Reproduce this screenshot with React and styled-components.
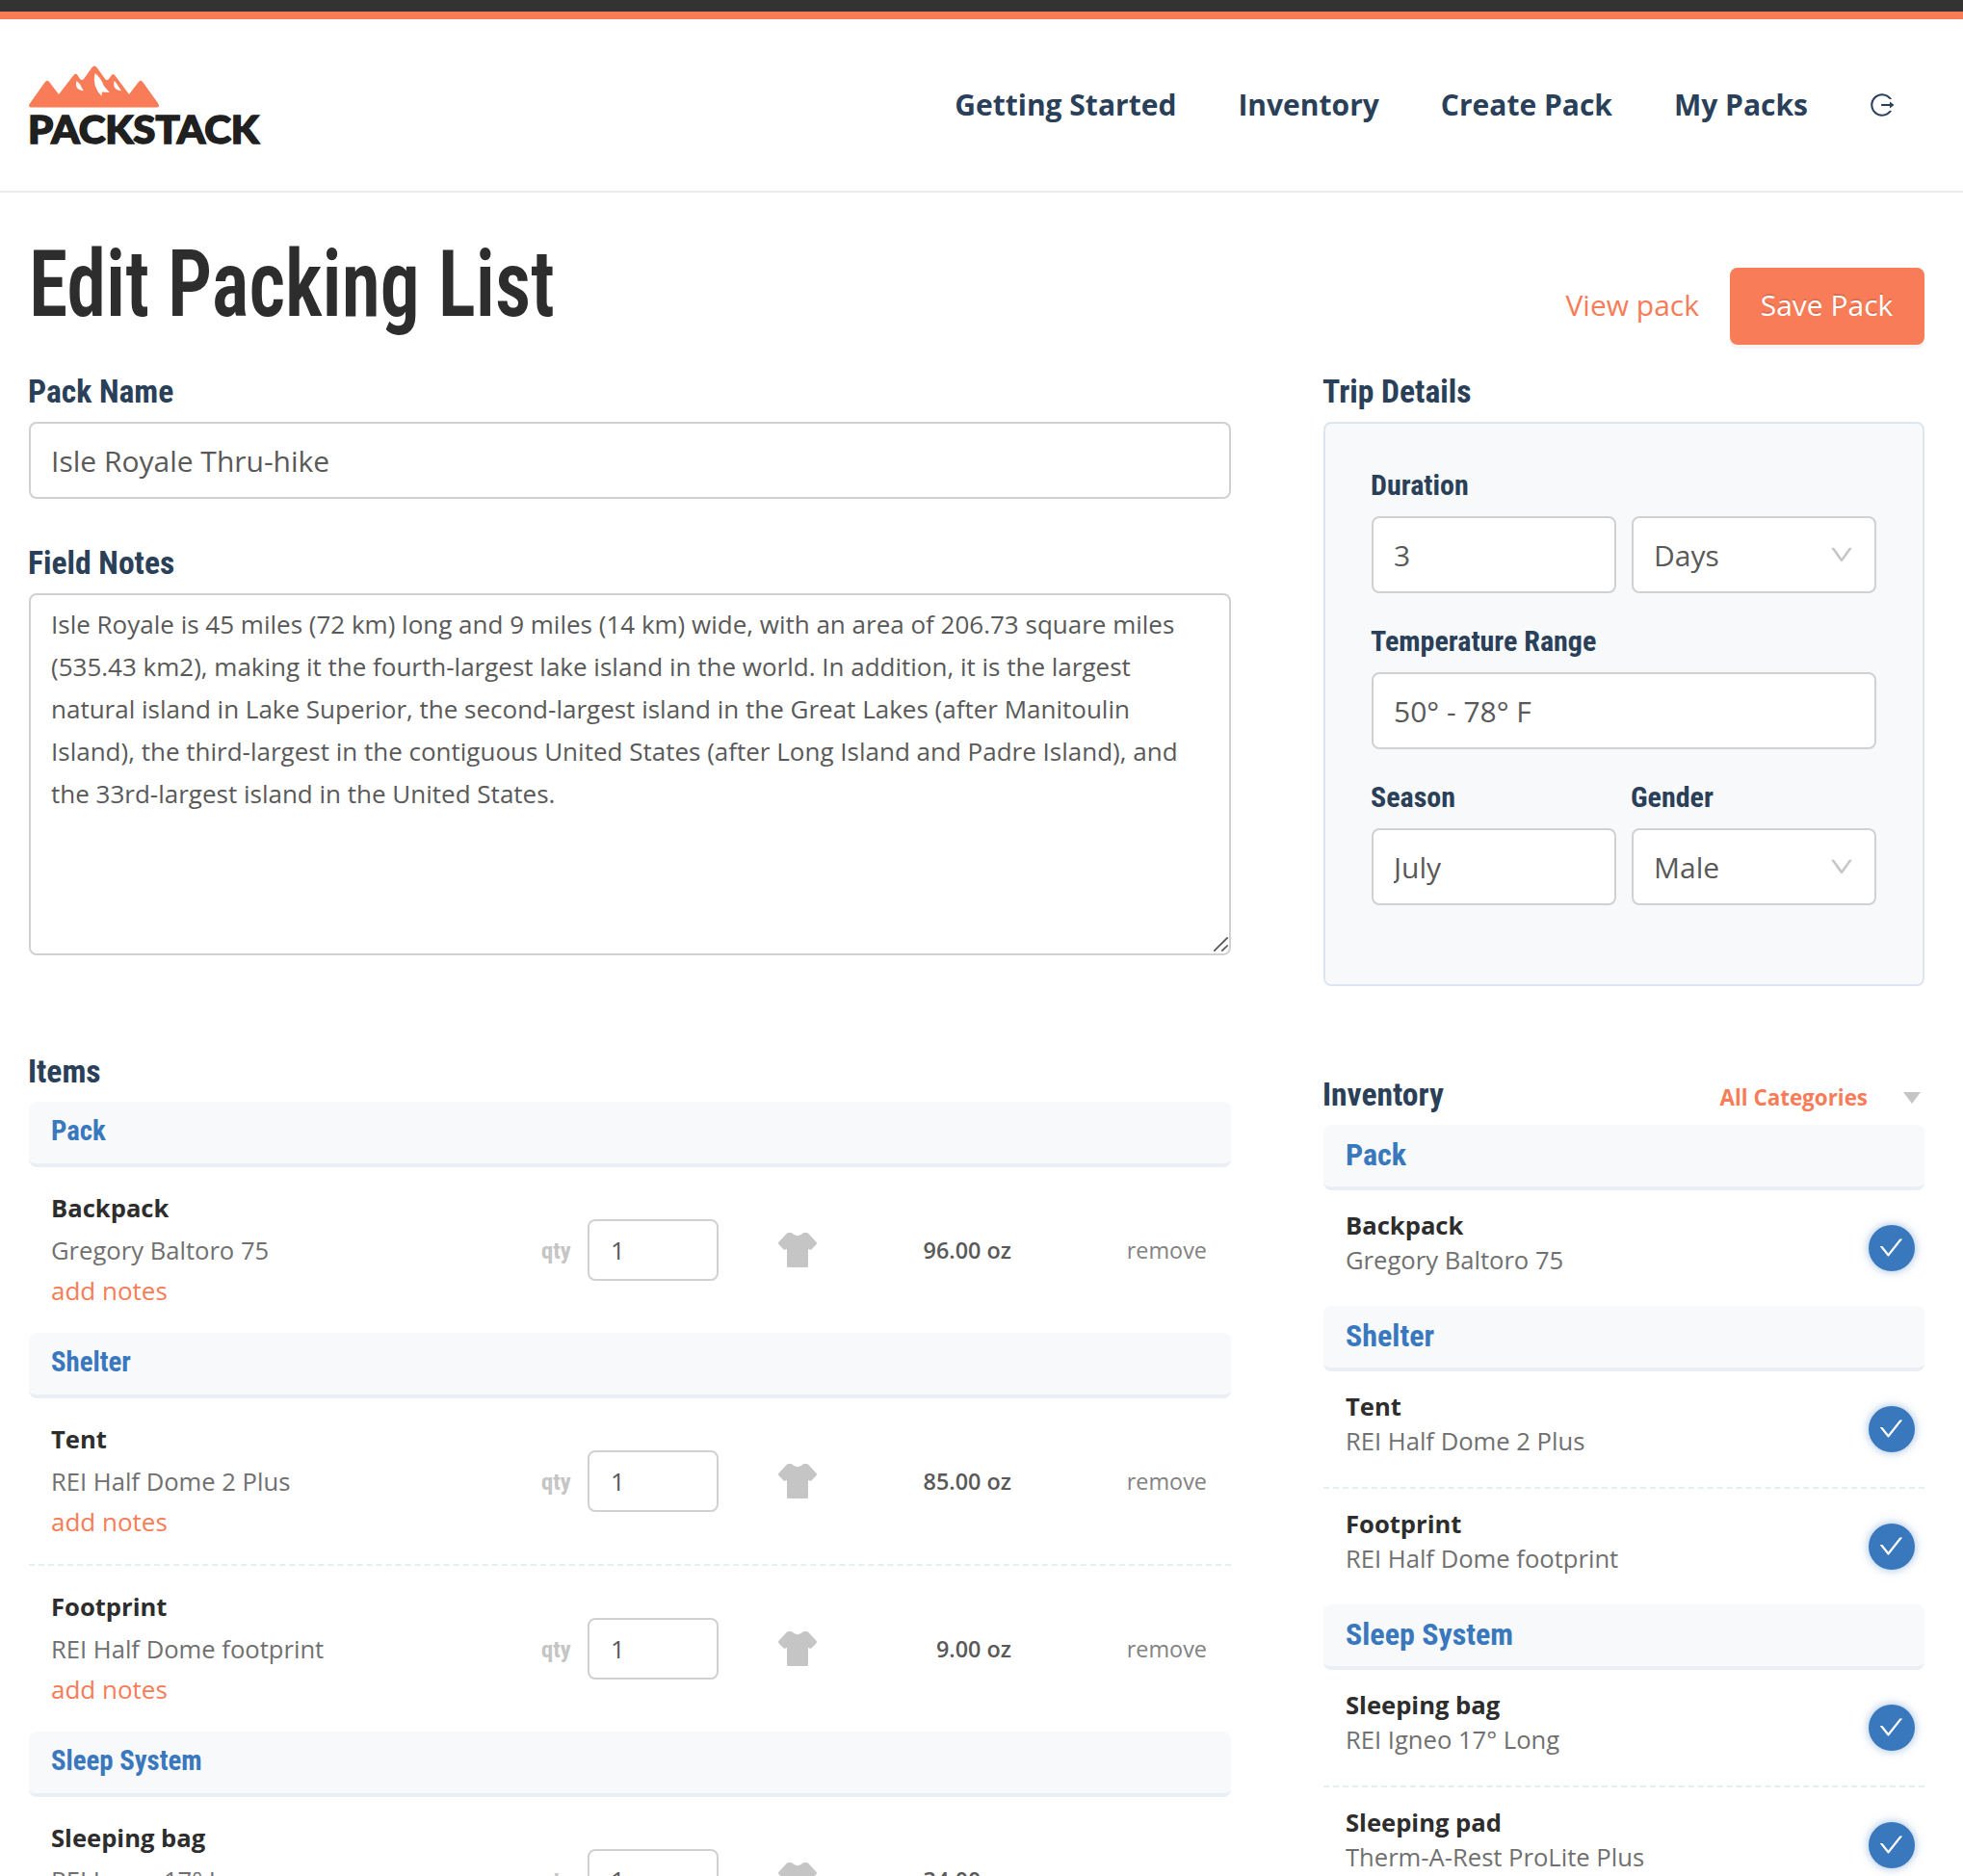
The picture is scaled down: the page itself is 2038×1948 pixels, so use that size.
import React from 'react'
import styled, { createGlobalStyle } from 'styled-components'
import { AiOutlineCheck, AiOutlineDown, AiOutlineLogout } from 'react-icons/ai'

const colors = {
  orange: '#f77c57',
  navy: '#2a4058',
  blue: '#3a78be',
  dark: '#2d2d2d',
  text: '#595959',
  muted: '#707070',
  light: '#c5c5c5',
  border: '#d1d1d1',
  panel: '#f7f9fb'
}

const categories = [
  {
    name: 'Pack',
    items: [{ name: 'Backpack', product: 'Gregory Baltoro 75', weight: '96.00' }]
  },
  {
    name: 'Shelter',
    items: [
      { name: 'Tent', product: 'REI Half Dome 2 Plus', weight: '85.00' },
      { name: 'Footprint', product: 'REI Half Dome footprint', weight: '9.00' }
    ]
  },
  {
    name: 'Sleep System',
    items: [
      { name: 'Sleeping bag', product: 'REI Igneo 17° Long', weight: '34.00' },
      { name: 'Sleeping pad', product: 'Therm-A-Rest ProLite Plus', weight: '24.00' }
    ]
  }
]

const fieldNotes =
  'Isle Royale is 45 miles (72 km) long and 9 miles (14 km) wide, with an area of 206.73 square miles (535.43 km2), making it the fourth-largest lake island in the world. In addition, it is the largest natural island in Lake Superior, the second-largest island in the Great Lakes (after Manitoulin Island), the third-largest in the contiguous United States (after Long Island and Padre Island), and the 33rd-largest island in the United States.'

const Logo = () => (
  <LogoSvg viewBox="0 0 242 92">
    <path
      fill={colors.orange}
      fillRule="evenodd"
      d="M2.5 48.6 Q-1 48.6 .6 45 L16.500 22.500 Q19 19 21.500 22.500 L31 35 L46.500 15 Q48.500 12.500 50.500 15 L53 19 Q55 21 57 19 L65.500 7 Q68 4 70.500 7 L79.500 19.500 Q81.500 21 83 19 L85.500 15.500 Q87.500 12.500 89.500 15.500 L104 35 L113.500 22.500 Q116 19 118.500 22.500 L134.600 45 Q136 48.600 132.500 48.600 Z
        M68.500 13 Q65.500 27 75.500 36.800 L76 32.500 L83.800 33 L78 26.500 Q74.500 17 68.500 13 Z
        M49.500 21 Q47 30.500 57 31.300 Q54.500 28.500 53.800 25.500 Q52 22.500 49.500 21 Z
        M88.500 21 Q86.500 30.500 96 31.300 L91.500 24.500 Q90.500 22 88.500 21 Z"
    />
    <text x="-1" y="86" textLength="240" lengthAdjust="spacingAndGlyphs">PACKSTACK</text>
  </LogoSvg>
)

const Shirt = () => (
  <svg viewBox="0 0 40 36">
    <path d="M10.800 0H12.500Q14 0 15 1.100Q17.300 3.200 20 3.200T25 1.100Q26 0 27.500 0H29.200Q30.600 0 31.400 1L39.500 9.800Q40.400 11 39.500 12.200L34.500 17.200Q33.200 18.300 32 17.200L31 16.800V34.500Q31 36 29.500 36H10.500Q9 36 9 34.500V16.800L8 17.200Q6.800 18.300 5.500 17.200L.5 12.200Q-.4 11 .5 9.800L8.600 1Q9.400 0 10.800 0Z" />
  </svg>
)

const ItemRow = ({ item, divided }) => (
  <Row $divided={divided}>
    <ItemInfo>
      <ItemName>{item.name}</ItemName>
      <ItemProduct>{item.product}</ItemProduct>
      <AddNotes>add notes</AddNotes>
    </ItemInfo>
    <QtyLabel>qty</QtyLabel>
    <QtyInput defaultValue="1" />
    <Worn>
      <Shirt />
    </Worn>
    <Weight>{item.weight} oz</Weight>
    <Remove>remove</Remove>
  </Row>
)

const InventoryRow = ({ item, divided }) => (
  <InvRow $divided={divided}>
    <InvInfo>
      <InvName>{item.name}</InvName>
      <InvProduct>{item.product}</InvProduct>
    </InvInfo>
    <Check>
      <AiOutlineCheck />
    </Check>
  </InvRow>
)

const App = () => (
  <Page>
    <GlobalStyle />
    <TopBar />
    <Header>
      <Logo />
      <Nav>
        <NavLink>Getting Started</NavLink>
        <NavLink>Inventory</NavLink>
        <NavLink>Create Pack</NavLink>
        <NavLink>My Packs</NavLink>
        <AiOutlineLogout />
      </Nav>
    </Header>

    <TitleBar>
      <Title>Edit Packing List</Title>
      <Actions>
        <ViewLink>View pack</ViewLink>
        <SaveButton>Save Pack</SaveButton>
      </Actions>
    </TitleBar>

    <Columns>
      <Main>
        <Label>Pack Name</Label>
        <Input defaultValue="Isle Royale Thru-hike" />
        <Label $top={44}>Field Notes</Label>
        <NotesWrapper>
          <Notes defaultValue={fieldNotes} />
          <Grip viewBox="0 0 18 18">
            <path d="M2.300 15.700 L16.700 1.300 M10.300 15.700 L16.700 9.500" />
          </Grip>
        </NotesWrapper>

        <Label $top={98}>Items</Label>
        {categories.map(category => (
          <section key={category.name}>
            <CategoryBar>{category.name}</CategoryBar>
            {category.items.map((item, i) => (
              <ItemRow key={item.name} item={item} divided={i < category.items.length - 1} />
            ))}
          </section>
        ))}
      </Main>

      <Sidebar>
        <Label>Trip Details</Label>
        <Panel>
          <Field $wide>
            <FieldLabel>Duration</FieldLabel>
            <Pair>
              <Input defaultValue="3" />
              <Select>
                Days
                <AiOutlineDown />
              </Select>
            </Pair>
          </Field>
          <Field $wide>
            <FieldLabel>Temperature Range</FieldLabel>
            <Input defaultValue="50° - 78° F" />
          </Field>
          <Field>
            <FieldLabel>Season</FieldLabel>
            <Input defaultValue="July" />
          </Field>
          <Field>
            <FieldLabel>Gender</FieldLabel>
            <Select>
              Male
              <AiOutlineDown />
            </Select>
          </Field>
        </Panel>

        <InventoryHeader>
          <Label>Inventory</Label>
          <Filter>
            All Categories
            <Caret viewBox="0 0 18 12">
              <path d="M0 0h18l-9 12z" />
            </Caret>
          </Filter>
        </InventoryHeader>
        {categories.map(category => (
          <section key={category.name}>
            <CategoryBar $large>{category.name}</CategoryBar>
            {category.items.map((item, i) => (
              <InventoryRow key={item.name} item={item} divided={i < category.items.length - 1} />
            ))}
          </section>
        ))}
      </Sidebar>
    </Columns>
  </Page>
)

const GlobalStyle = createGlobalStyle`
  * {
    box-sizing: border-box;
  }

  body {
    margin: 0;
    background: #fff;
    font-family: 'Open Sans', sans-serif;
    color: ${colors.text};
  }
`

const Page = styled.div`
  height: 1948px;
  overflow: hidden;
`

const TopBar = styled.div`
  height: 20px;
  background: #333;
  border-bottom: 8px solid ${colors.orange};
`

const Header = styled.header`
  display: flex;
  justify-content: space-between;
  align-items: center;
  height: 180px;
  padding: 0 70px 0 30px;
  border-bottom: 2px solid #ebebeb;
`

const LogoSvg = styled.svg`
  width: 242px;
  height: 92px;
  overflow: visible;

  text {
    font-family: Lato, sans-serif;
    font-size: 40px;
    font-weight: 900;
    fill: #202020;
    stroke: #202020;
    stroke-width: 1.5;
  }
`

const Nav = styled.nav`
  display: flex;
  align-items: center;
  gap: 64px;
  color: ${colors.navy};

  svg {
    width: 28px;
    height: 28px;
    margin-left: -1px;
  }
`

const NavLink = styled.a`
  font-size: 30px;
  line-height: 44px;
  font-weight: 700;
`

const TitleBar = styled.div`
  display: flex;
  justify-content: space-between;
  padding: 0 40px 0 30px;
  height: 184px;
`

const Title = styled.h1`
  margin: 0;
  padding-top: 37px;
  font-family: 'Roboto Condensed', Roboto, sans-serif;
  font-stretch: 75%;
  font-size: 97px;
  line-height: 116px;
  font-weight: 600;
  color: ${colors.dark};
  white-space: nowrap;
  transform: scaleX(0.843);
  transform-origin: left;
`

const Actions = styled.div`
  display: flex;
  align-items: center;
  gap: 32px;
  height: 80px;
  margin-top: 78px;
  font-size: 30px;
`

const ViewLink = styled.a`
  padding-bottom: 3px;
  color: ${colors.orange};
`

const SaveButton = styled.button`
  width: 202px;
  height: 80px;
  padding: 0 1px 3px 0;
  border: 0;
  border-radius: 8px;
  background: ${colors.orange};
  color: #fff;
  font: inherit;
  text-shadow: 0 -2px 0 rgba(0, 0, 0, 0.12);
  box-shadow: 0 4px 0 rgba(0, 0, 0, 0.045);
`

const Columns = styled.div`
  display: flex;
  justify-content: space-between;
  padding: 0 40px 0 30px;
`

const Main = styled.main`
  width: 1248px;
`

const Sidebar = styled.aside`
  width: 624px;
`

const Label = styled.div`
  margin: ${props => props.$top || 0}px 0 0 -1px;
  padding-top: 4px;
  height: 54px;
  font-family: 'Roboto Condensed', Roboto, sans-serif;
  font-stretch: 75%;
  font-size: 33.6px;
  line-height: 38px;
  font-weight: 700;
  color: ${colors.navy};
`

const Input = styled.input`
  display: block;
  width: 100%;
  min-width: 0;
  height: 80px;
  padding: 0 21px;
  border: 2px solid ${colors.border};
  border-radius: 8px;
  background: #fff;
  font-family: inherit;
  font-size: 30px;
  color: ${colors.text};
  outline: none;
`

const NotesWrapper = styled.div`
  position: relative;
  height: 376px;
`

const Notes = styled.textarea`
  display: block;
  width: 100%;
  height: 376px;
  padding: 8px 21px;
  border: 2px solid ${colors.border};
  border-radius: 8px;
  resize: none;
  font-family: inherit;
  font-size: 26px;
  line-height: 44px;
  color: ${colors.text};
  outline: none;
`

const Grip = styled.svg`
  position: absolute;
  right: 2px;
  bottom: 2px;
  width: 18px;
  height: 18px;
  stroke: #555;
  stroke-width: 1.7;
`

const Panel = styled.div`
  display: grid;
  grid-template-columns: 1fr 1fr;
  align-content: start;
  column-gap: 16px;
  height: 586px;
  padding: 40px 48px;
  border: 2px solid #dde6ef;
  border-radius: 8px;
  background: ${colors.panel};
`

const Field = styled.div`
  height: 162px;
  grid-column: ${props => (props.$wide ? '1 / -1' : 'auto')};
`

const FieldLabel = styled(Label)`
  height: 56px;
  padding-top: 7px;
  font-size: 30px;
  line-height: 34px;
`

const Pair = styled.div`
  display: grid;
  grid-template-columns: 1fr 1fr;
  gap: 16px;
`

const Select = styled.div`
  display: flex;
  justify-content: space-between;
  align-items: center;
  height: 80px;
  padding: 0 20px 0 21px;
  border: 2px solid ${colors.border};
  border-radius: 8px;
  background: #fff;
  font-size: 30px;

  svg {
    width: 28px;
    height: 28px;
    color: ${colors.light};
    stroke-width: 18px;
  }
`

const CategoryBar = styled.div`
  height: 68px;
  padding: 0 23px;
  border-bottom: 4px solid #e9eff4;
  border-radius: 8px;
  background: ${colors.panel};
  font-family: 'Roboto Condensed', Roboto, sans-serif;
  font-stretch: 75%;
  font-size: ${props => (props.$large ? 32 : 28.8)}px;
  line-height: ${props => (props.$large ? 62 : 60)}px;
  font-weight: 700;
  color: ${colors.blue};
`

const Row = styled.div`
  display: flex;
  align-items: center;
  height: ${props => (props.$divided ? 174 : 172)}px;
  padding: 0 25px 0 23px;
  border-bottom: ${props => (props.$divided ? '2px dashed #e4efef' : 'none')};
`

const ItemInfo = styled.div`
  width: 509px;
  height: 132px;
  padding-top: 1px;
`

const ItemName = styled.div`
  font-size: 25.6px;
  line-height: 44px;
  font-weight: 700;
  color: ${colors.dark};
`

const ItemProduct = styled.div`
  font-size: 25.6px;
  line-height: 44px;
  color: ${colors.muted};
`

const AddNotes = styled.a`
  display: block;
  font-size: 26px;
  line-height: 38px;
  color: ${colors.orange};
`

const QtyLabel = styled.span`
  width: 48px;
  padding-top: 1px;
  font-family: 'Roboto Condensed', Roboto, sans-serif;
  font-stretch: 75%;
  font-size: 24.6px;
  font-weight: 700;
  color: ${colors.light};
`

const QtyInput = styled(Input)`
  flex: none;
  width: 136px;
  height: 64px;
  padding: 0 22px;
  font-size: 26px;
`

const Worn = styled.span`
  display: flex;
  margin-left: 62px;

  svg {
    width: 40px;
    height: 36px;
    fill: ${colors.light};
  }
`

const Weight = styled.span`
  flex: 1;
  padding-bottom: 1px;
  text-align: right;
  font-size: 23.4px;
  font-weight: 600;
`

const Remove = styled.a`
  width: 203px;
  padding-bottom: 1px;
  text-align: right;
  font-size: 23.4px;
  color: #828282;
`

const InventoryHeader = styled.div`
  display: flex;
  justify-content: space-between;
  margin-top: 90px;
`

const Filter = styled.div`
  display: flex;
  padding: 4px 4px 0 0;
  font-size: 22.4px;
  line-height: 44px;
  font-weight: 700;
  color: ${colors.orange};
`

const Caret = styled.svg`
  width: 18px;
  height: 12px;
  margin: 16px 0 0 37px;
  fill: ${colors.light};
`

const InvRow = styled.div`
  display: flex;
  justify-content: space-between;
  align-items: flex-start;
  height: ${props => (props.$divided ? 122 : 120)}px;
  padding: 18px 10px 0 23px;
  border-bottom: ${props => (props.$divided ? '2px dashed #e4efef' : 'none')};
`

const InvInfo = styled.div`
  padding-top: 1px;
`

const InvName = styled(ItemName)`
  line-height: 36px;
`

const InvProduct = styled(ItemProduct)`
  line-height: 36px;
`

const Check = styled.span`
  display: flex;
  justify-content: center;
  align-items: center;
  width: 48px;
  height: 48px;
  margin-top: 18px;
  padding: 0 2px 2px 0;
  border-radius: 50%;
  background: ${colors.blue};
  color: #fff;
  box-shadow: 0 0 10px rgba(58, 120, 190, 0.5);

  svg {
    width: 29px;
    height: 29px;
  }
`

export default App
